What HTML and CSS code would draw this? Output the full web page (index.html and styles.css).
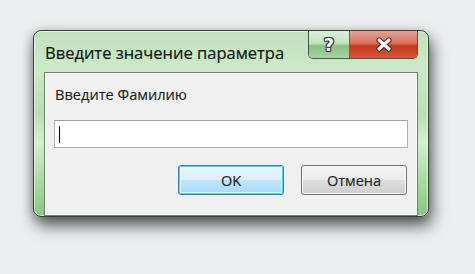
FILE: index.html
```html
<!DOCTYPE html>
<html lang="ru">
<head>
    <meta charset="UTF-8">
    <title>Введите значение параметра</title>
    <link rel="stylesheet" href="styles.css">
</head>
<body>
    <div class="window">
        <div class="titlebar">
            <span class="title">Введите значение параметра</span>
            <div class="caption-buttons">
                <div class="cap-btn help">?</div>
                <div class="cap-btn close">
                    <svg width="20" height="15" viewBox="0 0 20 15">
                        <path d="M5 3 L15 12 M15 3 L5 12" stroke="#4a2a24" stroke-width="5.4" stroke-linecap="round"/>
                        <path d="M5 3 L15 12 M15 3 L5 12" stroke="#ffffff" stroke-width="3.2" stroke-linecap="round"/>
                    </svg>
                </div>
            </div>
        </div>
        <div class="client">
            <div class="prompt">Введите Фамилию</div>
            <div class="field"><span class="caret"></span></div>
            <div class="buttons">
                <button class="btn default">OK</button>
                <button class="btn">Отмена</button>
            </div>
        </div>
    </div>
</body>
</html>
```

FILE: styles.css
```css
html {
    background-color: #eceeef;
}
body {
    margin: 0;
    min-height: 274px;
    box-sizing: border-box;
    padding: 30px 0 0 33px;
    background-color: #eceeef;
    font-family: "Open Sans", "Noto Sans", sans-serif;
    color: #1e1e1e;
}
.window {
    width: 394px;
    height: 185px;
    border: 1px solid #38403a;
    border-radius: 8px;
    background: linear-gradient(to bottom, #bfe2bc 0%, #cbe9c6 20%, #b9deb4 45%, #d4f0cf 60%, #a2d69b 85%, #86c97e 100%);
    box-shadow: 3px 9px 16px rgba(0, 0, 0, 0.6), -2px 2px 10px rgba(0, 0, 0, 0.2), inset 0 0 0 1px rgba(255, 255, 255, 0.6);
    display: flex;
    flex-direction: column;
}
.titlebar {
    height: 41px;
    display: flex;
    justify-content: space-between;
    align-items: flex-start;
    padding: 0 10px 0 11px;
}
.title {
    font-size: 16.5px;
    margin-top: 10px;
    color: #101510;
    -webkit-text-stroke: 0.2px #101510;
}
.caption-buttons {
    display: flex;
    height: 27px;
    border: 1px solid #4a554c;
    border-top: none;
    border-radius: 0 0 5px 5px;
    overflow: hidden;
}
.cap-btn {
    display: flex;
    align-items: center;
    justify-content: center;
}
.help {
    width: 40px;
    background: linear-gradient(to bottom, #dcefd9 0%, #c4e2bf 45%, #8cbf86 55%, #a9d3a2 100%);
    border-right: 1px solid #5d6a5e;
    font-family: "DejaVu Sans", sans-serif;
    font-weight: bold;
    font-size: 18px;
    color: #fff;
    text-shadow: 1px 0 0 #3a4048, -1px 0 0 #3a4048, 0 1px 0 #3a4048, 0 -1px 0 #3a4048, 1px 1px 0 #3a4048, -1px -1px 0 #3a4048, 1px -1px 0 #3a4048, -1px 1px 0 #3a4048;
    padding-bottom: 1px;
}
.close {
    width: 67px;
    background: linear-gradient(to bottom, #e8a294 0%, #d9715c 45%, #c6381c 55%, #d8553a 100%);
}
.client {
    flex: 1;
    margin: 0 10px;
    border: 1px solid #6f7c70;
    box-shadow: inset 0 0 0 1px #ffffff;
    background-color: #f0f0f0;
    padding: 0 9px;
}
.prompt {
    font-size: 14.6px;
    margin-top: 11px;
    margin-left: 1px;
    -webkit-text-stroke: 0.15px #1e1e1e;
}
.field {
    height: 26px;
    margin-top: 16px;
    background: #ffffff;
    border: 1px solid #acb2ac;
    border-top-color: #9ca29c;
    display: flex;
    align-items: center;
    padding-left: 4px;
}
.caret {
    width: 1px;
    height: 17px;
    background: #000;
}
.buttons {
    display: flex;
    justify-content: flex-end;
    gap: 17px;
    margin-top: 17px;
    margin-right: 1px;
}
.btn {
    width: 106px;
    height: 30px;
    font-family: "Open Sans", "Noto Sans", sans-serif;
    font-size: 14.5px;
    color: #1e1e1e;
    border: 1px solid #707070;
    border-radius: 3px;
    background: linear-gradient(to bottom, #f2f2f2 0%, #ebebeb 48%, #dddddd 52%, #cfcfcf 100%);
    box-shadow: inset 0 0 0 1px #fcfcfc;
    padding: 0;
    -webkit-text-stroke: 0.15px #1e1e1e;
}
.btn.default {
    border-color: #3c7fb1;
    background: linear-gradient(to bottom, #eaf6fd 0%, #d9f0fc 48%, #bee6fd 52%, #a7d9f5 100%);
    box-shadow: inset 0 0 0 1px #48d2f9, inset 0 0 0 2px #e6f6fd;
}
```
